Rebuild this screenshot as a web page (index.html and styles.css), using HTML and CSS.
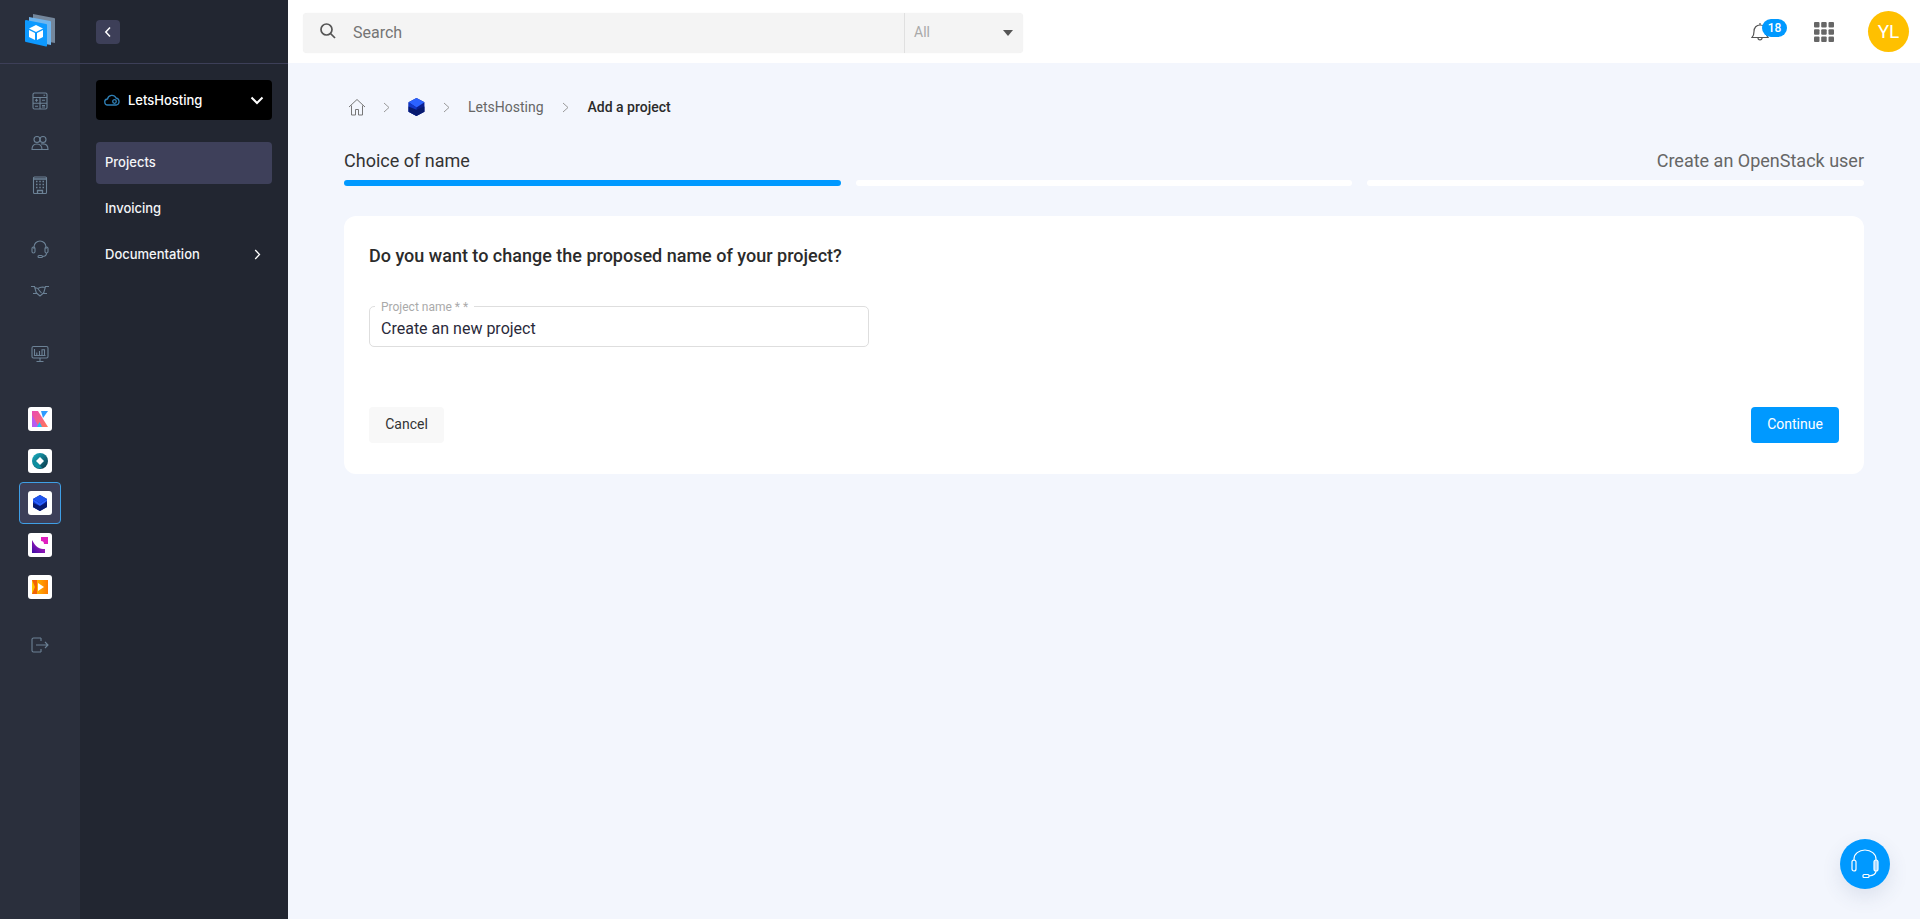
FILE: index.html
```html
<!DOCTYPE html>
<html lang="en">
<head>
<meta charset="utf-8">
<title>Add a project</title>
<link rel="stylesheet" href="styles.css">
</head>
<body>
<div class="app">
  <nav class="rail">
    <div class="rail-logo">
      <svg width="32" height="34" viewBox="0 0 32 34">
        <path d="M9 1 30 5a1 1 0 0 1 1 1v24l-22-4z" fill="#74879c"/>
        <path d="M5 4 26 8a1 1 0 0 1 1 1v23L5 28z" fill="#6fb5ee"/>
        <path d="M2 7 22 11a1 1 0 0 1 1 1v21a1 1 0 0 1-1 .5L2 29a1 1 0 0 1-1-1V8a1 1 0 0 1 1-1z" fill="#0d99ff"/>
        <path d="M12 12 19 15.500 12 19 5 15.500z" fill="#fff"/>
        <path d="M5 17 11 20v7l-6-3zM13 20l6-3v7l-6 3z" fill="#fff"/>
      </svg>
    </div>
    <div class="rail-group group-a">
      <a class="rail-icon"><svg width="18" height="18" viewBox="0 0 18 18" class="ico"><rect x="2" y="1" width="14" height="16" rx="1.500"/><path d="M2 5.500h14M9 5.500V17M2 11.200h14M4 8.300h3M5.500 6.800v3M11 8.300h3M4 14.200h3M11 13.500h3M11 15h3M12.500 3.200h1.500"/></svg></a>
      <a class="rail-icon"><svg width="18" height="18" viewBox="0 0 18 18" class="ico"><circle cx="6" cy="5.500" r="3"/><circle cx="12" cy="5.500" r="3"/><path d="M1 15.500c0-3.500 2-5.500 5-5.500s5 2 5 5.500zM10 10c.6-.1 1.300-.1 2-.1 3 0 5 2 5 5.600h-6"/></svg></a>
      <a class="rail-icon"><svg width="18" height="18" viewBox="0 0 18 18" class="ico"><rect x="2.500" y="1" width="13" height="16.500" rx="1"/><path d="M2.500 3h13M5 5.500h1.500M8.250 5.500h1.500M11.500 5.500H13M5 8.500h1.500M8.250 8.500h1.500M11.500 8.500H13M5 11.500h1.500M8.250 11.500h1.500M11.500 11.500H13M6.500 17.500v-3h5v3" stroke-width="1.300"/></svg></a>
    </div>
    <div class="rail-group group-b">
      <a class="rail-icon"><svg width="18" height="20" viewBox="0 0 18 20" class="ico"><path d="M3 10V8a6 6 0 0 1 12 0v2"/><rect x="1" y="8" width="3" height="6" rx="1.500"/><rect x="14" y="8" width="3" height="6" rx="1.500"/><path d="M15.500 14c0 2.500-2 3.500-4 3.500"/><rect x="7" y="16.500" width="4.500" height="2" rx="1"/></svg></a>
      <a class="rail-icon"><svg width="18" height="12" viewBox="0 0 18 12" class="ico"><path d="M0 1.500h3.500l2 7H2M18 1.500h-3.500l-2 7H16M3.500 2.500 7 3.500l2-1 2.500-.5 3 .5M5.500 8 9 11l3.500-3M7 4 10.500 8"/></svg></a>
    </div>
    <div class="rail-group group-c">
      <a class="rail-icon"><svg width="18" height="18" viewBox="0 0 18 18" class="ico"><rect x="1" y="1.500" width="16" height="11.500" rx="1.500"/><path d="M9 13v3M5.500 16.500h7M3.500 4v6.500h11M5.800 10V7.500M8.500 10V6M11 10V4.800h2.500V10"/></svg></a>
    </div>
    <div class="apps">
      <a class="app-slot"><span class="tile"><svg width="16" height="16" viewBox="0 0 16 16"><defs><linearGradient id="k1" x1="0" y1="0" x2="1" y2="1"><stop offset="0" stop-color="#e94bb4"/><stop offset="1" stop-color="#ff7a59"/></linearGradient></defs><rect width="16" height="16" fill="#fff"/><rect width="6" height="16" fill="#b65cf0"/><path d="M0 0h6l10 16H7L0 4z" fill="url(#k1)"/><path d="M9 0h7l-5 7z" fill="#2e9bff"/><path d="M5 16l2.500-5L10 16z" fill="#16c6f5"/></svg></span></a>
      <a class="app-slot"><span class="tile"><svg width="16" height="16" viewBox="0 0 16 16"><defs><linearGradient id="c1" x1="0" y1="0" x2="1" y2="1"><stop offset="0" stop-color="#19b6c8"/><stop offset="1" stop-color="#0a2f40"/></linearGradient></defs><circle cx="8" cy="8" r="8" fill="url(#c1)"/><path d="M1 9a7 7 0 0 0 9 6L5 9z" fill="#0e8fa0"/><path d="M8 4 12 8 8 12 4 8z" fill="#fff"/></svg></span></a>
      <a class="app-slot is-active"><span class="tile"><svg width="16" height="16" viewBox="0 0 16 16"><path d="M8 0l7 4v8l-7 4-7-4V4z" fill="#0b1f8f"/><path d="M8 0l7 4-7 4.500L1 4z" fill="#1f54ee"/><path d="M1 4l7 4.500V16l-7-4z" fill="#1238c8"/><path d="M8 8.500 15 4v2L8 11 1 6V4z" fill="#2b62ff"/><path d="M8 11l7-3v4l-7 4-7-4V8z" fill="#071a70"/></svg></span></a>
      <a class="app-slot"><span class="tile"><svg width="16" height="16" viewBox="0 0 16 16"><defs><linearGradient id="p1" x1="0" y1="1" x2="1" y2="0"><stop offset="0" stop-color="#3a0ca3"/><stop offset="1" stop-color="#d61fc4"/></linearGradient></defs><path d="M0 3c2 3 3 6 6 7.500 2 1 4 1.500 7 1.500v4H0z" fill="url(#p1)"/><path d="M9 0h7v7h-4c0-2-1-3-3-3z" fill="#e01fc0"/></svg></span></a>
      <a class="app-slot"><span class="tile"><svg width="16" height="14" viewBox="0 0 16 14"><defs><linearGradient id="o1" x1="0" y1="0" x2="1" y2="0"><stop offset="0" stop-color="#ffca00"/><stop offset="1" stop-color="#ff7a00"/></linearGradient></defs><rect width="16" height="14" fill="url(#o1)"/><path d="M0 0h5v14H0l3-7z" fill="#f26207"/><path d="M6 3l6 4-6 4z" fill="#fff"/></svg></span></a>
    </div>
    <a class="rail-icon logout"><svg width="18" height="16" viewBox="0 0 18 16" class="ico"><path d="M10 1H2.500A1.500 1.500 0 0 0 1 2.500v11A1.500 1.500 0 0 0 2.500 15H10M10 1v3M10 12v3M5 8h12M14 5l3 3-3 3"/></svg></a>
  </nav>

  <aside class="sidebar">
    <div class="side-top">
      <button class="back"><svg width="8" height="12" viewBox="0 0 8 12"><path d="M6 1.500 1.800 6 6 10.500" fill="none" stroke="#fff" stroke-width="1.500"/></svg></button>
    </div>
    <div class="side-body">
      <div class="org">
        <svg width="16" height="12" viewBox="0 0 16 12" fill="none" stroke="#2f7fb5" stroke-width="1.300"><path d="M4 11a3 3 0 0 1-.5-6A4.500 4.500 0 0 1 12 4a3.600 3.600 0 0 1 .5 7z"/><circle cx="10.500" cy="7.500" r="1.800"/></svg>
        <span class="org-name">LetsHosting</span>
        <svg class="org-caret" width="14" height="9" viewBox="0 0 14 9"><path d="M1.500 1.500 7 7l5.500-5.500" fill="none" stroke="#fff" stroke-width="2"/></svg>
      </div>
      <ul class="menu">
        <li class="menu-item is-current">Projects</li>
        <li class="menu-item">Invoicing</li>
        <li class="menu-item has-sub">Documentation<svg width="7" height="11" viewBox="0 0 7 11"><path d="M1.200 1 5.500 5.500 1.200 10" fill="none" stroke="#fff" stroke-width="1.300"/></svg></li>
      </ul>
    </div>
  </aside>

  <div class="content">
    <header class="topbar">
      <div class="search">
        <div class="search-field">
          <svg class="search-ico" width="18" height="18" viewBox="0 0 18 18" fill="none" stroke="#555" stroke-width="1.700"><circle cx="7.500" cy="7.500" r="5.500"/><path d="M11.500 11.500 16 16"/></svg>
          <span class="search-text">Search</span>
        </div>
        <div class="search-scope"><span>All</span><i class="tri"></i></div>
      </div>
      <div class="top-actions">
        <div class="bell">
          <svg width="18" height="20" viewBox="0 0 18 20" fill="none" stroke="#555" stroke-width="1.200"><path d="M1 15.500c1.500-1.500 2-2.500 2-6C3 5.500 5.500 3 9 3s6 2.500 6 6.500c0 3.500.5 4.500 2 6zM9 1v2M7 16c0 2.500 4 2.500 4 0"/></svg>
          <span class="badge">18</span>
        </div>
        <svg class="grid-ico" width="20" height="20" viewBox="0 0 20 20" fill="#666"><rect width="5.500" height="5.500" rx="1"/><rect x="7.200" width="5.500" height="5.500" rx="1"/><rect x="14.500" width="5.500" height="5.500" rx="1"/><rect y="7.200" width="5.500" height="5.500" rx="1"/><rect x="7.200" y="7.200" width="5.500" height="5.500" rx="1"/><rect x="14.500" y="7.200" width="5.500" height="5.500" rx="1"/><rect y="14.500" width="5.500" height="5.500" rx="1"/><rect x="7.200" y="14.500" width="5.500" height="5.500" rx="1"/><rect x="14.500" y="14.500" width="5.500" height="5.500" rx="1"/></svg>
        <div class="avatar">YL</div>
      </div>
    </header>

    <main class="main">
      <div class="crumbs">
        <svg class="home" width="18" height="18" viewBox="0 0 18 18" fill="none" stroke="#777" stroke-width="1"><path d="M1 9 9 1.500 17 9M3.500 7.500V17h4v-5.500h3V17h4V7.500"/></svg>
        <svg class="sep" width="7" height="11" viewBox="0 0 7 11"><path d="M1 1 6 5.500 1 10" fill="none" stroke="#999"/></svg>
        <svg width="17" height="18" viewBox="0 0 16 17"><path d="M8 0l7.500 4v9L8 17 .5 13V4z" fill="#0b1f8f"/><path d="M8 0l7.500 4L8 9 .5 4z" fill="#2b62ff"/><path d="M.5 4 8 9v8l-7.500-4z" fill="#1238c8"/><path d="M8 11l7.500-3v5L8 17 .5 13V8z" fill="#071a70"/></svg>
        <svg class="sep" width="7" height="11" viewBox="0 0 7 11"><path d="M1 1 6 5.500 1 10" fill="none" stroke="#999"/></svg>
        <span class="crumb">LetsHosting</span>
        <svg class="sep" width="7" height="11" viewBox="0 0 7 11"><path d="M1 1 6 5.500 1 10" fill="none" stroke="#999"/></svg>
        <span class="crumb crumb-now">Add a project</span>
      </div>

      <div class="steps-labels">
        <span class="step-on">Choice of name</span>
        <span class="step-off">Create an OpenStack user</span>
      </div>
      <div class="steps-bars">
        <div class="bar bar-on"></div>
        <div class="bar"></div>
        <div class="bar"></div>
      </div>

      <section class="card">
        <h2 class="card-title">Do you want to change the proposed name of your project?</h2>
        <div class="field">
          <span class="field-label">Project name * *</span>
          <span class="field-value">Create an new project</span>
        </div>
        <div class="card-actions">
          <button class="btn btn-cancel">Cancel</button>
          <button class="btn btn-go">Continue</button>
        </div>
      </section>
    </main>
  </div>
</div>

<button class="help">
  <svg width="32" height="32" viewBox="0 0 32 32" fill="none" stroke="#fff" stroke-width="1.200"><path d="M5 13V11a11 9 0 0 1 22 0v2"/><rect x="3" y="12" width="4" height="11" rx="2"/><rect x="25" y="12" width="4" height="11" fill="#a8d8ff" rx="2"/><path d="M27 23c0 3-3 4.500-7 5"/><rect x="14" y="26.500" width="6" height="3" rx="1"/></svg>
</button>
</body>
</html>
```

FILE: styles.css
```css
* { box-sizing: border-box; }
html, body { margin: 0; height: 100%; }
body { font-family: Roboto, "Liberation Sans", sans-serif; color: #2b2b2b; background: #f3f6fd; overflow: hidden; }
a { display: flex; }
button { font-family: inherit; border: 0; cursor: pointer; }

.app { display: flex; height: 919px; }

/* far left rail */
.rail { width: 80px; flex: none; background: #2a2f3c; display: flex; flex-direction: column; align-items: center; }
.rail-logo { width: 100%; height: 64px; display: flex; justify-content: center; align-items: center; padding-bottom: 3px; border-bottom: 1px solid #3d3f58; }
.rail-group { display: flex; flex-direction: column; align-items: center; gap: 24px; }
.rail-icon { width: 18px; height: 18px; align-items: center; justify-content: center; }
.ico { fill: none; stroke: #6c8296; stroke-width: 1.100; }
.group-a { margin-top: 28px; }
.group-b { margin-top: 46px; }
.group-c { margin-top: 45px; }
.apps { margin-top: 35px; display: flex; flex-direction: column; align-items: center; }
.app-slot { width: 42px; height: 42px; align-items: center; justify-content: center; border: 1px solid transparent; border-radius: 4px; }
.app-slot.is-active { background: #3d3f58; border-color: #3f9fe6; }
.tile { width: 24px; height: 24px; background: #fff; border-radius: 3px; display: flex; align-items: center; justify-content: center; }
.logout { margin-top: 28px; }

/* second sidebar */
.sidebar { width: 208px; flex: none; background: #222631; display: flex; flex-direction: column; }
.side-top { height: 64px; padding: 20px 16px 0; border-bottom: 1px solid #3d3f58; }
.back { width: 24px; height: 24px; padding: 0; border-radius: 4px; background: #3d3f58; display: flex; align-items: center; justify-content: center; }
.side-body { padding: 16px 16px 0; font-family: Inter, sans-serif; color: #fff; }
.org { height: 40px; background: #000; border-radius: 4px; display: flex; align-items: center; padding: 0 8px; font-size: 13px; font-weight: 500; }
.org-name { margin-left: 8px; flex: 1; }
.org-caret { margin-right: 0; }
.menu { list-style: none; margin: 22px 0 0; padding: 0; display: flex; flex-direction: column; gap: 4px; }
.menu-item { height: 42px; padding: 0 9px 2px; display: flex; align-items: center; font-size: 13px; font-weight: 500; border-radius: 4px; color: #f4f5f8; }
.menu-item.is-current { background: #3e405a; }
.has-sub { justify-content: space-between; padding-right: 11px; }

/* top bar */
.content { flex: 1; display: flex; flex-direction: column; min-width: 0; }
.topbar { height: 63px; flex: none; background: #fff; display: flex; align-items: center; justify-content: space-between; padding: 0 11px 1px 15px; }
.search { width: 720px; height: 40px; margin-top: 4px; background: #f4f4f4; border-radius: 4px; display: flex; box-shadow: 0 0 1px rgba(0,0,0,.08); }
.search-field { flex: 1; display: flex; align-items: center; gap: 16px; padding: 0 0 2px 16px; }
.search-ico { margin-bottom: 2px; }
.search-text { font-size: 16px; color: #757575; }
.search-scope { width: 119px; border-left: 1px solid #e0e0e0; display: flex; align-items: center; justify-content: space-between; padding: 0 10px 3px 9px; font-size: 14px; color: #a9a9a9; }
.tri { width: 0; height: 0; border: 5px solid transparent; border-top: 6px solid #555; border-bottom: 0; margin-top: 2px; }
.top-actions { display: flex; align-items: center; }
.bell { position: relative; width: 18px; height: 20px; margin-right: 45px; margin-top: 1px; }
.bell svg { display: block; }
.badge { position: absolute; left: 11px; top: -3px; width: 25px; height: 18px; border-radius: 9px; background: #0099ff; color: #fff; font-size: 12px; font-weight: 500; display: flex; align-items: center; justify-content: center; }
.grid-ico { margin-right: 34px; margin-top: 1px; }
.avatar { width: 41px; height: 41px; border-radius: 50%; background: #ffc000; color: #fff; font-size: 19px; display: flex; align-items: center; justify-content: center; }

/* main */
.main { flex: 1; padding: 0 56px 0 56px; }
.crumbs { display: flex; align-items: center; height: 20px; margin: 34px 0 0 4px; font-size: 14px; }
.crumbs .sep { margin: 0 18px; }
.crumbs .home + .sep { margin-left: 17px; }
.crumbs .crumb + .sep { margin-right: 19px; }
.crumb { color: #666; }
.crumb-now { color: #2b2b2b; font-weight: 500; font-size: 14px; }
.steps-labels { display: flex; justify-content: space-between; margin-top: 33px; font-size: 18px; line-height: 22px; }
.step-on { color: #333; }
.step-off { color: #666; }
.steps-bars { display: grid; grid-template-columns: repeat(3, 1fr); gap: 15px; margin-top: 8px; }
.bar { height: 6px; border-radius: 3px; background: #fff; }
.bar-on { background: #0099ff; }

.card { margin-top: 30px; height: 258px; background: #fff; border-radius: 12px; padding: 30px 25px 31px; display: flex; flex-direction: column; }
.card-title { margin: 0; font-size: 18px; line-height: 20px; font-weight: 500; color: #2b2b2b; }
.field { position: relative; width: 500px; height: 41px; margin-top: 40px; border: 1px solid #dedede; border-radius: 5px; padding: 12px 11px 0; font-size: 16px; line-height: 20px; color: #2a2a3a; }
.field-label { position: absolute; left: 5px; top: -7px; padding: 0 6px; background: #fff; font-size: 12px; line-height: 14px; color: #aaa; }
.card-actions { margin-top: auto; display: flex; justify-content: space-between; }
.btn { height: 36px; padding: 0 0 2px; font-size: 14px; border-radius: 4px; }
.btn-cancel { width: 75px; background: #f8f8f8; color: #333; }
.btn-go { width: 88px; background: #0099ff; color: #fff; }

.help { position: fixed; left: 1840px; top: 839px; width: 50px; height: 50px; padding: 0; border-radius: 50%; background: #0099ff; display: flex; align-items: center; justify-content: center; box-shadow: 0 8px 20px rgba(60,80,120,.12); }
```
